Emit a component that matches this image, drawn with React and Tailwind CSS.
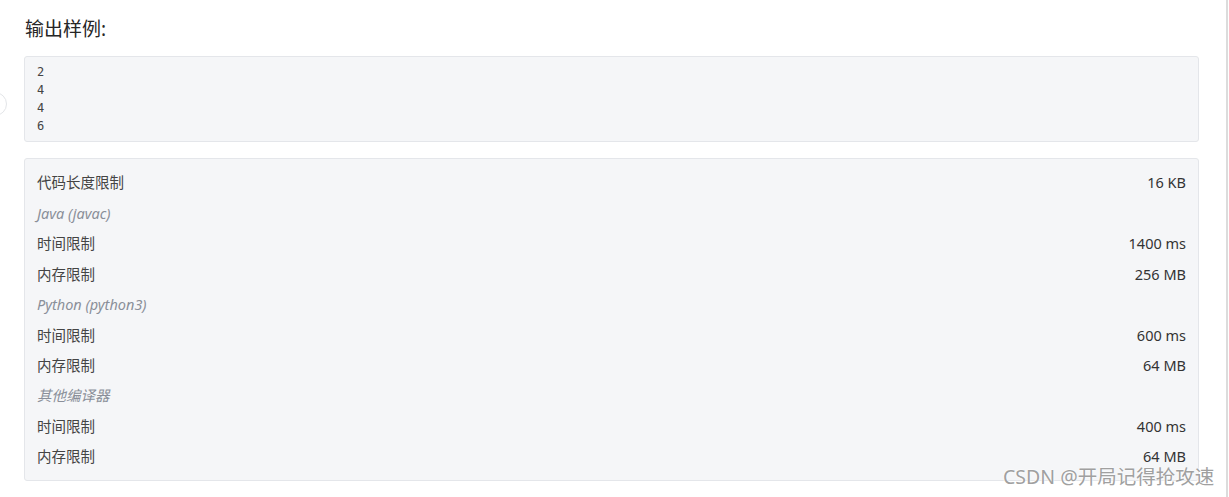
import React from 'react';

const limits = [
  { label: '代码长度限制', value: '16 KB' },
  { label: 'Java (javac)', group: true },
  { label: '时间限制', value: '1400 ms' },
  { label: '内存限制', value: '256 MB' },
  { label: 'Python (python3)', group: true },
  { label: '时间限制', value: '600 ms' },
  { label: '内存限制', value: '64 MB' },
  { label: '其他编译器', group: true },
  { label: '时间限制', value: '400 ms' },
  { label: '内存限制', value: '64 MB' },
];

export default function App() {
  return (
    <div
      className="relative w-[1229px] h-[497px] overflow-hidden bg-white"
      style={{ fontFamily: '"Noto Sans", "Noto Sans CJK SC", sans-serif' }}
    >
      {/* half-hidden circle on the left edge */}
      <div className="absolute left-[-17px] top-[92px] w-[24px] h-[24px] rounded-full border border-[#e3e5e8] bg-white" />
      {/* scrollbar edge */}
      <div className="absolute right-[1px] top-0 bottom-0 w-[2px] bg-[#dcdcdc]" />

      <div className="w-[1175px] ml-[24px] pt-[16px]">
        <h3 className="text-[19px] leading-[27px] font-normal text-[#262626] pl-[1px]">输出样例:</h3>

        {/* Output sample */}
        <pre
          className="mt-[13px] h-[86px] px-[12px] pt-[6px] pb-[6px] rounded-[3px] border border-[#e4e6ea] bg-[#f5f6f8] text-[12px] leading-[18px] text-[#444]"
          style={{ fontFamily: '"DejaVu Sans Mono", monospace' }}
        >
          {'2\n4\n4\n6'}
        </pre>

        {/* Limits */}
        <div className="mt-[16px] h-[323px] rounded-[3px] border border-[#e4e6ea] bg-[#f5f6f8] px-[12px] pt-[9px] pb-[8px]">
          {limits.map((row, i) => (
            <div key={i} className="flex justify-between items-center h-[30.45px] text-[14.5px]">
              <span className={row.group ? 'italic text-[#8a8f99]' : 'text-[#444]'}>{row.label}</span>
              {row.value && <span className="text-[#333]">{row.value}</span>}
            </div>
          ))}
        </div>
      </div>

      {/* watermark */}
      <div
        className="absolute left-[1003px] top-[463px] text-[19.5px] leading-[28px] text-[#a0a0a0]"
        style={{ textShadow: '0 0 2px #fff, 0 0 2px #fff' }}
      >
        CSDN @开局记得抢攻速
      </div>
    </div>
  );
}
